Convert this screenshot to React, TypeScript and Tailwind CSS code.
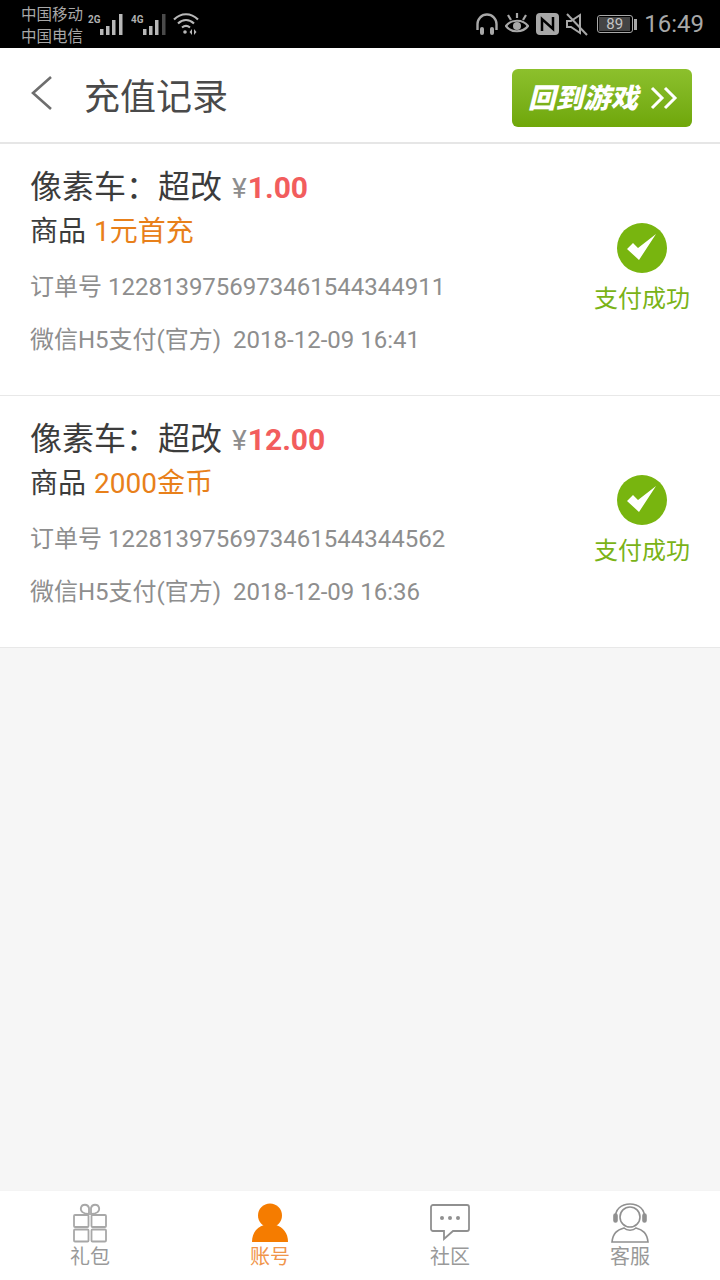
import React from 'react';

const FONT = '"Roboto", "Noto Sans CJK SC", sans-serif';

const ORDERS = [
  { amount: '1.00', product: '1元首充', no: '1228139756973461544344911', time: '2018-12-09 16:41' },
  { amount: '12.00', product: '2000金币', no: '1228139756973461544344562', time: '2018-12-09 16:36' },
];

const BARS = [
  { x: 0, h: 6 },
  { x: 6, h: 9 },
  { x: 12, h: 15 },
  { x: 19, h: 21 },
];

const Signal = ({ label, lit }: { label: string; lit: number }) => (
  <div className="relative w-[26px] h-[24px]">
    <span className="absolute left-0 top-[1px] text-[11px] leading-[14px] font-bold text-[#b0b0b0] scale-x-90 origin-left">{label}</span>
    <svg className="absolute left-[12px] top-[1px]" width="24" height="22" viewBox="0 0 24 22">
      {BARS.map((bar, i) => (
        <rect key={bar.x} x={bar.x} y={22 - bar.h} width="3.5" height={bar.h} fill={i < lit ? '#b8b8b8' : '#4a4a4a'} />
      ))}
    </svg>
  </div>
);

const StatusBar = () => (
  <div className="h-[48px] bg-black flex items-center justify-between pl-[21px] pr-[16px] text-[#a8a8a8]">
    <div className="flex items-center">
      <div className="text-[15.5px] leading-[22px] w-[67px] pt-[4px]">
        <div>中国移动</div>
        <div>中国电信</div>
      </div>
      <Signal label="2G" lit={4} />
      <div className="w-[17px]" />
      <Signal label="4G" lit={3} />
      <svg className="ml-[16px]" width="26" height="22" viewBox="0 0 26 22" fill="none" stroke="#b8b8b8" strokeWidth="2.2">
        <path d="M1 6.500c7-7 17-7 24 0" />
        <path d="M5 10.500c5-4.500 11-4.500 16 0" />
        <path d="M9 14.500c2.500-2 5.500-2 8 0" />
        <circle cx="12" cy="19" r="1.800" fill="#b8b8b8" stroke="none" />
        <path d="M19 16v6l-2.500-3zM21 16v6l2.500-3z" fill="#b8b8b8" stroke="none" />
      </svg>
    </div>
    <div className="flex items-center">
      <svg width="24" height="24" viewBox="0 0 24 24" fill="none">
        <path d="M2.500 18v-6a9.500 9.500 0 0 1 19 0v6" stroke="#a8a8a8" strokeWidth="2.400" />
        <rect x="5" y="15" width="4" height="8" rx="2" fill="#a8a8a8" />
        <rect x="15" y="15" width="4" height="8" rx="2" fill="#a8a8a8" />
      </svg>
      <svg className="ml-[6px]" width="24" height="24" viewBox="0 0 24 24" fill="none" stroke="#a8a8a8" strokeWidth="2.200">
        <path d="M1 14c5-7 17-7 22 0-5 7-17 7-22 0z" />
        <circle cx="12" cy="14" r="4" fill="#a8a8a8" stroke="none" />
        <path d="M3 3l3 5M12 1v5M21 3l-3 5" />
      </svg>
      <svg className="ml-[7px]" width="23" height="24" viewBox="0 0 23 24">
        <rect x="0" y="1" width="23" height="22" rx="4" fill="#a8a8a8" />
        <path d="M6 19V7l11 10V5" fill="none" stroke="#000000" strokeWidth="2.500" />
      </svg>
      <svg className="ml-[7px]" width="23" height="24" viewBox="0 0 23 24" fill="none" stroke="#a8a8a8" strokeWidth="2">
        <path d="M1 9h4l9-6v18l-9-6H1z" />
        <path d="M1 2l20 21" />
      </svg>
      <div className="ml-[8px] w-[36px] h-[18px] border border-[#a8a8a8] rounded-[3px] p-[1px]">
        <div className="h-full w-[31px] bg-[#444444] text-[#c4c4c4] text-[15px] leading-[14px] text-center">89</div>
      </div>
      <div className="ml-[1px] w-[3px] h-[11px] bg-[#a8a8a8]" />
      <span className="ml-[7px] text-[24px] leading-[28px]">16:49</span>
    </div>
  </div>
);

const Header = () => (
  <div className="h-[96px] bg-white border-b-2 border-[#e6e6e6] flex items-center justify-between pl-[30px] pr-[28px]">
    <div className="flex items-center">
      <svg className="mb-[4px]" width="24" height="36" viewBox="0 0 24 36" fill="none" stroke="#6e6e6e" strokeWidth="2.600">
        <path d="M21 2L3 18l18 16" />
      </svg>
      <h1 className="ml-[30px] mt-[6px] text-[36px] leading-[44px] text-[#4a4a4a]">充值记录</h1>
    </div>
    <div className="mt-[6px] w-[180px] h-[58px] rounded-[6px] bg-gradient-to-b from-[#8cc02c] to-[#6fa708] flex items-center pl-[16px] text-white">
      <span className="mt-[2px] text-[27.5px] leading-[32px] font-black italic">回到游戏</span>
      <svg className="ml-[12px]" width="28" height="24" viewBox="0 0 28 24" fill="none" stroke="#ffffff" strokeWidth="3">
        <path d="M2 2l10 10L2 22M15 2l10 10-10 10" />
      </svg>
    </div>
  </div>
);

const OrderRow = ({ order }: { order: (typeof ORDERS)[number] }) => (
  <div className="h-[252px] bg-white border-b border-[#e8e8e8] flex justify-between pl-[30px] pr-[30px]">
    <div className="pt-[21px]">
      <div className="flex items-baseline h-[44px]">
        <span className="text-[32px] leading-[44px] text-[#3c3c3c]">像素车：超改</span>
        <span className="ml-[10px] text-[28px] text-[#8e8e8e]">¥</span>
        <span className="ml-px text-[30px] font-bold text-[#f25d5d]">{order.amount}</span>
      </div>
      <div className="text-[28px] leading-[40px] text-[#3c3c3c] mt-[3px]">
        商品 <span className="ml-px text-[#e8801a]">{order.product}</span>
      </div>
      <div className="text-[24px] leading-[32px] text-[#8e8e8e] mt-[19px]">订单号 {order.no}</div>
      <div className="text-[24px] leading-[32px] text-[#8e8e8e] mt-[21px]">
        微信H5支付(官方)&nbsp; {order.time}
      </div>
    </div>
    <div className="w-[96px] flex flex-col items-center pt-[79px]">
      <svg width="50" height="50" viewBox="0 0 50 50">
        <circle cx="25" cy="25" r="25" fill="#78b50f" />
        <path d="M10 26L16 20L21 25L39 11L22 37z" fill="#ffffff" />
      </svg>
      <span className="mt-[10px] text-[24px] leading-[32px] text-[#7ab317] whitespace-nowrap">支付成功</span>
    </div>
  </div>
);

const TABS = ['礼包', '账号', '社区', '客服'];

const TabIcon = ({ index }: { index: number }) => {
  if (index === 0) {
    return (
      <svg width="36" height="40" viewBox="0 0 36 40" fill="none" stroke="#a8a8a8" strokeWidth="1.800">
        <path d="M17 11c-6 0-9-3-8-6.500s7-4 8 .5zM19 11c6 0 9-3 8-6.500s-7-4-8 .5z" />
        <rect x="2" y="12" width="14.500" height="12" rx="1" />
        <rect x="19.500" y="12" width="14.500" height="12" rx="1" />
        <rect x="2" y="26.500" width="14.500" height="12" rx="1" />
        <rect x="19.500" y="26.500" width="14.500" height="12" rx="1" />
      </svg>
    );
  }
  if (index === 1) {
    return (
      <svg width="36" height="40" viewBox="0 0 36 40" fill="#f57c00">
        <circle cx="18" cy="12.500" r="12" />
        <path d="M0 39c0-9 5-15 12-17h12c7 2 12 8 12 17z" />
      </svg>
    );
  }
  if (index === 2) {
    return (
      <svg width="42" height="40" viewBox="0 0 42 40" fill="none" stroke="#909090" strokeWidth="1.800">
        <path d="M4 2h34a2 2 0 0 1 2 2v22a2 2 0 0 1-2 2H24l-9 8v-8H4a2 2 0 0 1-2-2V4a2 2 0 0 1 2-2z" />
        <circle cx="13" cy="15" r="2" fill="#909090" stroke="none" />
        <circle cx="21" cy="15" r="2" fill="#909090" stroke="none" />
        <circle cx="29" cy="15" r="2" fill="#909090" stroke="none" />
      </svg>
    );
  }
  return (
    <svg width="38" height="40" viewBox="0 0 38 40" fill="none" stroke="#909090" strokeWidth="1.600">
      <circle cx="19" cy="14" r="10" />
      <path d="M5 16c-2-10 6-15 14-15s16 5 14 15" />
      <rect x="3" y="11" width="3" height="8" rx="1.500" fill="#909090" />
      <rect x="32" y="11" width="3" height="8" rx="1.500" fill="#909090" />
      <path d="M13 25c-7 2-11 5-12 14h36c-1-9-5-12-12-14-3 3-9 3-12 0z" />
    </svg>
  );
};

const TabBar = () => (
  <div className="h-[90px] bg-white border-t border-[#f4f4f4] grid grid-cols-4">
    {TABS.map((label, i) => (
      <div key={label} className="flex flex-col items-center pt-[12px]">
        <div className="h-[40px] flex items-end">
          <TabIcon index={i} />
        </div>
        <span className={`text-[20px] leading-[28px] ${i === 1 ? 'text-[#f0954a]' : 'text-[#999999]'}`}>{label}</span>
      </div>
    ))}
  </div>
);

export default function App() {
  return (
    <div className="w-[720px] h-[1280px] flex flex-col bg-[#f6f6f6] overflow-hidden" style={{ fontFamily: FONT }}>
      <StatusBar />
      <Header />
      {ORDERS.map(order => (
        <OrderRow key={order.no} order={order} />
      ))}
      <div className="flex-1" />
      <TabBar />
    </div>
  );
}
